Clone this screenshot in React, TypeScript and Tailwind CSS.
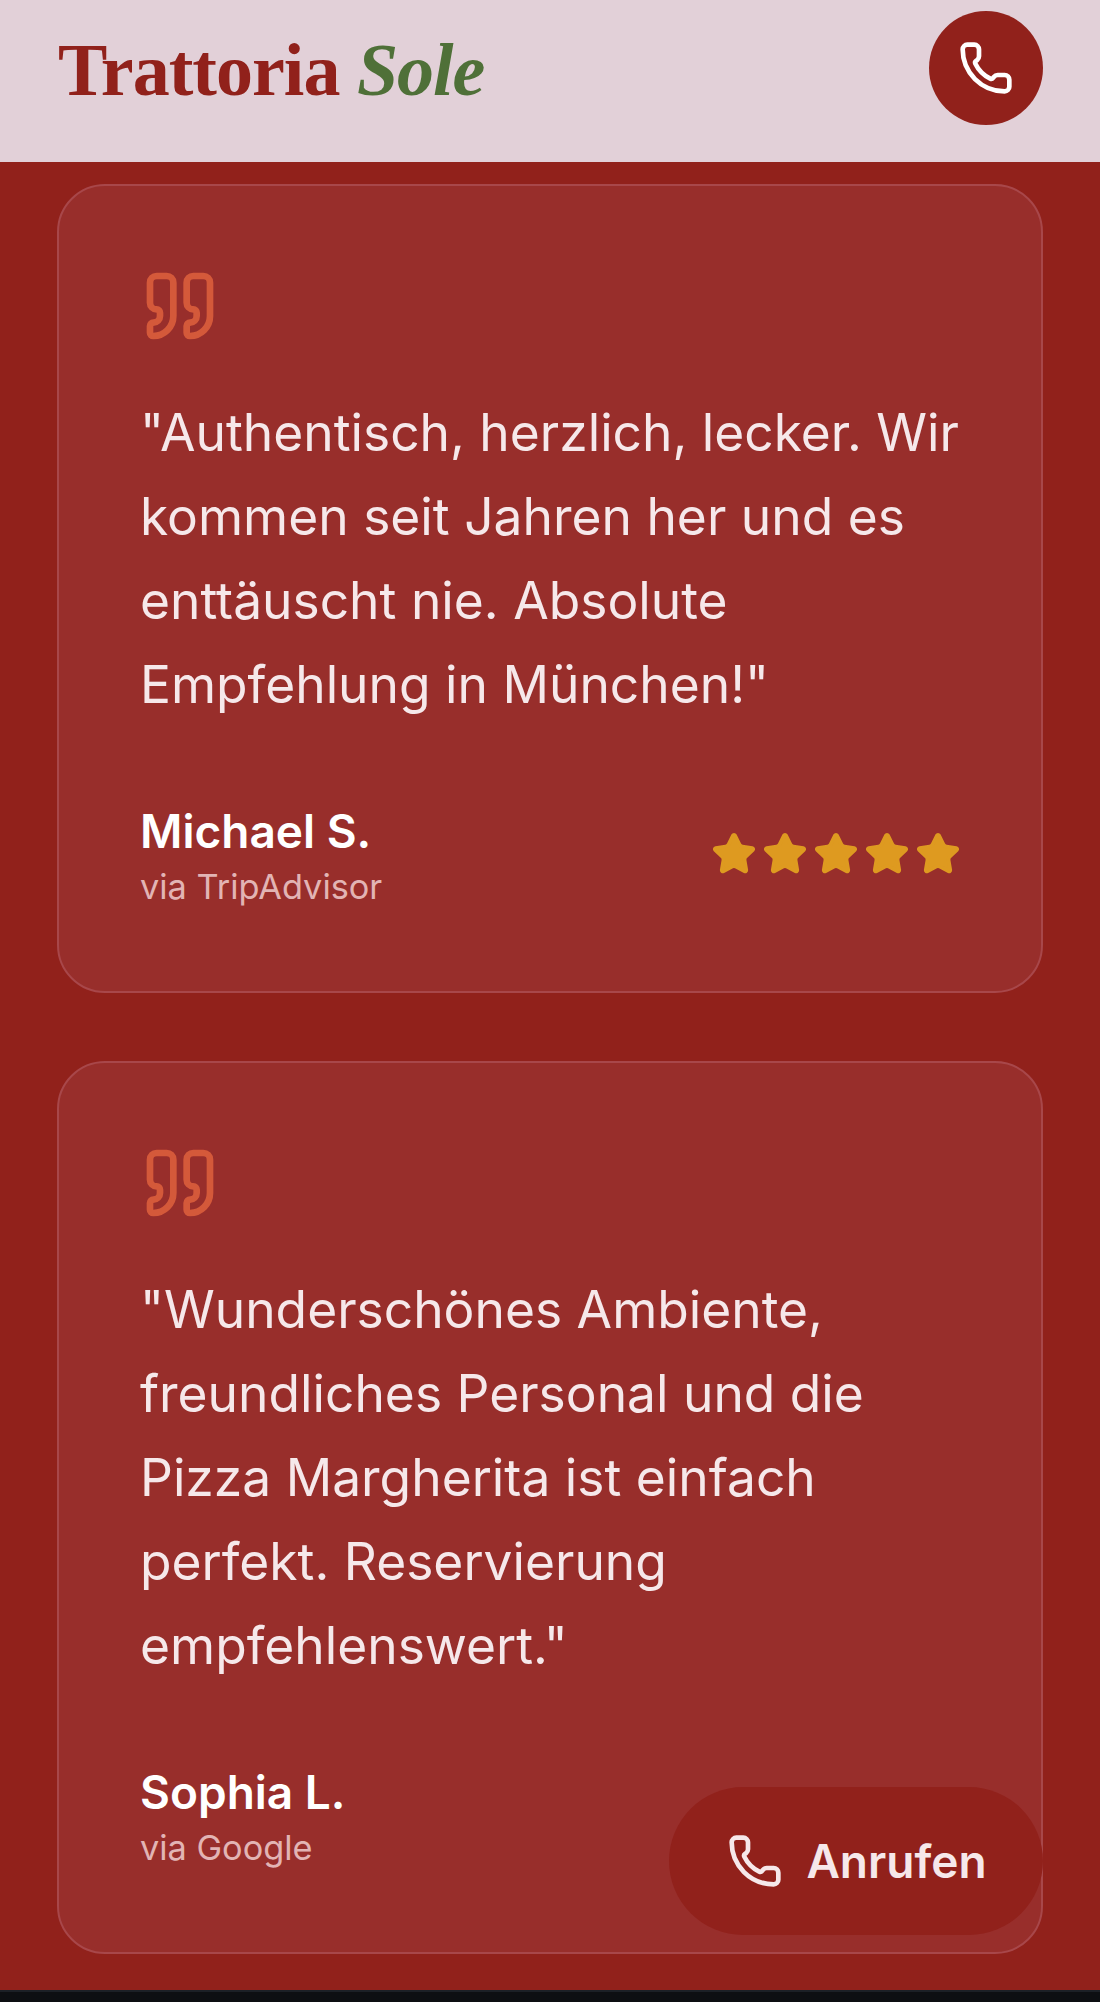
import { Phone, Quote, Star } from 'lucide-react';

type Review = {
    text: string;
    name: string;
    source: string;
    stars: boolean;
};

const reviews: Review[] = [
    {
        text: '"Authentisch, herzlich, lecker. Wir kommen seit Jahren her und es enttäuscht nie. Absolute Empfehlung in München!"',
        name: 'Michael S.',
        source: 'via TripAdvisor',
        stars: true,
    },
    {
        text: '"Wunderschönes Ambiente, freundliches Personal und die Pizza Margherita ist einfach perfekt. Reservierung empfehlenswert."',
        name: 'Sophia L.',
        source: 'via Google',
        stars: false,
    },
];

function ReviewCard({ review }: { review: Review }) {
    return (
        <div className="rounded-[48px] border-2 border-[#a8474a] bg-[#982e2b] py-[80px] pr-[80px] pl-[81px]">
            <Quote className="h-20 w-20 text-[#d4593a]" strokeWidth={2} />
            <p className="mt-[44px] text-[51.5px] leading-[84px] text-[#f6e8ea]">{review.text}</p>
            <div className="mt-[75px] flex items-center justify-between">
                <div>
                    <div className="text-[46px] leading-[60px] font-semibold text-white">{review.name}</div>
                    <div className="pt-[1px] text-[34.3px] leading-[49px] text-[#e2b4b4]">{review.source}</div>
                </div>
                {review.stars && (
                    <div className="flex gap-[5px] pb-[4px]">
                        {[0, 1, 2, 3, 4].map((i) => (
                            <Star key={i} className="h-[46px] w-[46px] fill-[#de9a20] text-[#de9a20]" />
                        ))}
                    </div>
                )}
            </div>
        </div>
    );
}

export default function App() {
    return (
        <div className="relative flex h-[2002px] flex-col overflow-hidden bg-[#91211b] font-['Inter',sans-serif]">
            {/* Header */}
            <header className="flex h-[162px] shrink-0 items-center justify-between bg-[#e2d0d8] pr-[57px] pb-[26px] pl-[58px]">
                <div className="pt-[3px] font-['Liberation_Serif',serif] text-[74px] leading-none font-bold tracking-[-1px] text-[#91211b]">
                    Trattoria <span className="text-[#4f7038] italic">Sole</span>
                </div>
                <button className="flex h-[114px] w-[114px] items-center justify-center rounded-full bg-[#91211b]">
                    <Phone className="h-[56px] w-[56px] text-white" strokeWidth={2} />
                </button>
            </header>

            {/* Reviews */}
            <main className="flex flex-1 flex-col gap-[68px] overflow-hidden pt-[22px] pr-[57px] pl-[57px]">
                {reviews.map((review) => (
                    <ReviewCard key={review.name} review={review} />
                ))}
            </main>

            <div className="h-3 shrink-0 border-t-2 border-[#1c2026] bg-[#0d0f12]" />

            {/* Floating call button */}
            <button className="absolute right-[57px] bottom-[67px] flex h-[148px] w-[374px] items-center justify-center gap-[23px] rounded-full bg-[#91211b] text-[46px] font-semibold text-[#f6e8ea]">
                <Phone className="ml-[2px] h-[56px] w-[56px]" strokeWidth={2} />
                Anrufen
            </button>
        </div>
    );
}
